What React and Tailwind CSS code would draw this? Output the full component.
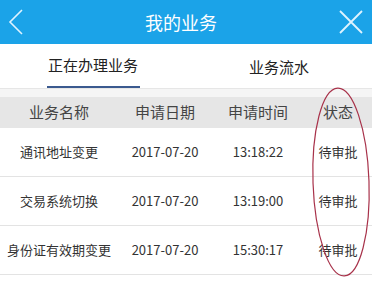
import React from 'react';

const rows = [
    { name: '通讯地址变更', date: '2017-07-20', time: '13:18:22', status: '待审批' },
    { name: '交易系统切换', date: '2017-07-20', time: '13:19:00', status: '待审批' },
    { name: '身份证有效期变更', date: '2017-07-20', time: '15:30:17', status: '待审批' },
];

const cols = "grid grid-cols-[118px_94px_92px_1fr] items-center text-center";

export default function App() {
    return (
        <div className="relative w-[372px] h-[290px] overflow-hidden bg-white" style={{ fontFamily: '"Noto Sans CJK SC", "Liberation Sans", sans-serif' }}>
            <div className="h-[44px] bg-[#1ba3e8] flex items-center justify-between px-[8px]">
                <svg width="16" height="26" viewBox="0 0 16 26" fill="none" stroke="#dff3ff" strokeWidth="1.6">
                    <path d="M14 1 L2 13 L14 25" />
                </svg>
                <div className="text-white text-[18px] leading-none">我的业务</div>
                <svg width="26" height="26" viewBox="0 0 26 26" fill="none" stroke="#dff3ff" strokeWidth="1.8">
                    <path d="M2 2 L24 24 M24 2 L2 24" />
                </svg>
            </div>
            <div className="h-[45px] grid grid-cols-2 border-b border-[#e6e6e6]">
                <div className="flex flex-col items-center justify-end">
                    <div className="text-[15px] text-[#222] leading-none mb-[14px]">正在办理业务</div>
                    <div className="w-[93px] h-[2px] bg-[#3b5a8f]"></div>
                </div>
                <div className="flex items-center justify-center">
                    <div className="text-[15px] text-[#222] leading-none">业务流水</div>
                </div>
            </div>
            <div className="h-[8px] bg-[#f5f5f5]"></div>
            <div className={`${cols} h-[31px] bg-[#e6e6e6] text-[15px] text-[#444]`}>
                <div>业务名称</div>
                <div>申请日期</div>
                <div>申请时间</div>
                <div>状态</div>
            </div>
            {rows.map(r => (
                <div key={r.name} className={`${cols} h-[49px] border-b border-[#e3e3e3] text-[13px] text-[#333]`}>
                    <div>{r.name}</div>
                    <div>{r.date}</div>
                    <div>{r.time}</div>
                    <div>{r.status}</div>
                </div>
            ))}
            <svg className="absolute left-0 top-0 pointer-events-none" width="372" height="290" viewBox="0 0 372 290">
                <ellipse cx="341" cy="182" rx="28" ry="94" transform="rotate(-2 341 182)" fill="none" stroke="#a8324a" strokeWidth="1.2" />
            </svg>
        </div>
    );
}
